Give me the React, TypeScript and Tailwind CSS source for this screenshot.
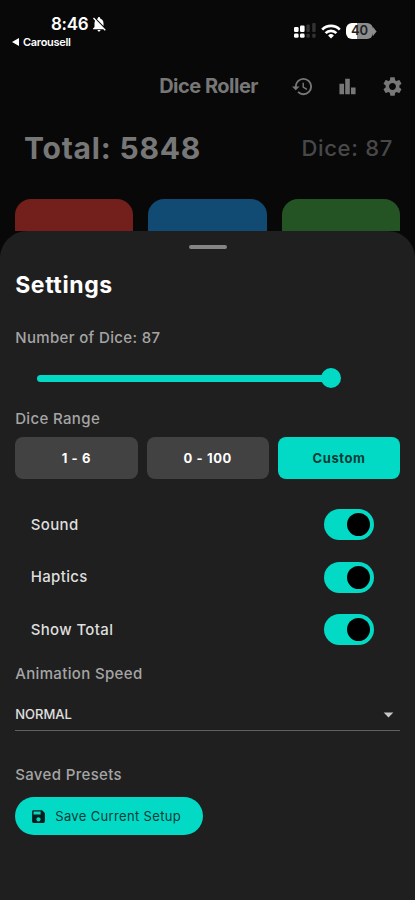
import React, { useState } from 'react';
import { MdArrowDropDown, MdHistory, MdNotificationsOff, MdSave, MdSettings } from 'react-icons/md';

function SignalIcon() {
  return (
    <svg width="22" height="16" viewBox="0 0 22 16" fill="#fff">
      <rect x="0" y="4" width="4.6" height="5" rx="1.2" />
      <rect x="6" y="2.6" width="4.6" height="6.4" rx="1.2" />
      <rect x="12.4" y="1.5" width="3.4" height="7.5" rx="1" fill="#333" />
      <rect x="18.2" y="0" width="3.4" height="9" rx="1" fill="#333" />
      <rect x="0" y="10.6" width="4.6" height="4.2" rx="1.4" />
      <rect x="6" y="10.6" width="4.6" height="4.2" rx="1.4" />
      <rect x="12.4" y="10.8" width="3.4" height="4" rx="1" fill="#333" />
      <rect x="18.2" y="10.8" width="3.4" height="4" rx="1" fill="#333" />
    </svg>
  );
}

function WifiIcon() {
  return (
    <svg width="20" height="15" viewBox="0 0 20 15" fill="none" stroke="#fff" strokeWidth="2.7">
      <path d="M1.2 5.6a12.4 12.4 0 0 1 17.6 0" />
      <path d="M4.6 9.1a7.6 7.6 0 0 1 10.8 0" />
      <path d="M10 14.4l-2.9-2.9a4.1 4.1 0 0 1 5.8 0z" fill="#fff" stroke="none" />
    </svg>
  );
}

function Battery() {
  return (
    <div className="flex items-center">
      <div className="flex h-4 w-[27px] items-center justify-center rounded-[6px] bg-linear-to-r from-white from-42% to-[#8d8d8d] to-42% text-[13px] font-semibold text-[#222]">
        40
      </div>
      <svg width="4" height="9" viewBox="0 0 4 9" fill="#8d8d8d">
        <path d="M0 0L3.6 4.5L0 9z" />
      </svg>
    </div>
  );
}

function BarsIcon() {
  return (
    <svg width="23" height="23" viewBox="0 0 24 24" fill="currentColor">
      <path d="M3.6 9h4.8v11H3.6zM9.6 4h4.8v16H9.6zM15.6 13h4.8v7h-4.8z" />
    </svg>
  );
}

interface ToggleProps {
  label: string;
  checked: boolean;
  onChange: (value: boolean) => void;
}

function ToggleRow({ label, checked, onChange }: ToggleProps) {
  return (
    <div className="flex h-[52.7px] items-center justify-between pr-[26px] pl-[15.5px]">
      <span className="pt-px text-[15px] font-medium tracking-[0.35px] text-[#dedede]">{label}</span>
      <button
        role="switch"
        aria-checked={checked}
        aria-label={label}
        onClick={() => onChange(!checked)}
        className={`flex h-[31px] w-[50px] items-center rounded-full px-1 ${checked ? 'justify-end bg-[#03dac5]' : 'justify-start bg-[#424242]'}`}
      >
        <span className="size-[23px] rounded-full bg-black" />
      </button>
    </div>
  );
}

const RANGES = ['1 - 6', '0 - 100', 'Custom'];

export default function App() {
  const [range, setRange] = useState('Custom');
  const [sound, setSound] = useState(true);
  const [haptics, setHaptics] = useState(true);
  const [showTotal, setShowTotal] = useState(true);

  return (
    <div className="flex h-[900px] w-[415px] flex-col overflow-hidden bg-[#080808] font-['Inter',sans-serif]">
      <div className="flex h-[60px] justify-between pr-[38px] pl-3 text-white">
        <div className="pt-[13px]">
          <div className="flex h-[22px] items-center gap-[2px] pl-[39px]">
            <span className="pt-px text-[17px] font-semibold tracking-[-0.3px]">8:46</span>
            <MdNotificationsOff size={18} />
          </div>
          <div className="flex h-[14px] items-center gap-1 text-[11px] font-semibold">
            <svg width="7" height="8" viewBox="0 0 7 8" fill="#fff">
              <path d="M7 0v8L0 4z" />
            </svg>
            <span className="tracking-[-0.3px]">Carousell</span>
          </div>
        </div>
        <div className="flex h-[62px] items-center gap-[5px]">
          <SignalIcon />
          <WifiIcon />
          <Battery />
        </div>
      </div>

      <div className="flex h-[52px] shrink-0 items-center justify-end pr-[11px] text-[#777]">
        <h1 className="mr-[33px] text-[20px] font-bold tracking-[-0.5px]">Dice Roller</h1>
        <div className="flex items-center gap-[22px]">
          <MdHistory size={23} />
          <BarsIcon />
          <MdSettings size={23} />
        </div>
      </div>

      <div className="flex h-[87px] shrink-0 items-center justify-between pr-[22px] pl-6 pb-[14px]">
        <span className="text-[30px] font-bold tracking-[0.8px] text-[#777]">Total: 5848</span>
        <span className="text-[22px] font-medium tracking-[0.7px] text-[#484848]">Dice: 87</span>
      </div>

      <div className="flex h-8 shrink-0 gap-[15px] px-[15px]">
        <div className="flex-1 rounded-t-2xl bg-[#73201c]" />
        <div className="flex-1 rounded-t-2xl bg-[#114a73]" />
        <div className="flex-1 rounded-t-2xl bg-[#245424]" />
      </div>

      <div className="flex flex-1 flex-col rounded-t-[27px] bg-[#1f1f1f] pt-[14px] pr-[14.8px] pl-[15.2px]">
        <div className="h-1 w-[38px] shrink-0 self-center rounded-full bg-[#858585]" />
        <h2 className="mt-[20px] text-[23px] leading-8 font-bold tracking-[0.6px] text-white">Settings</h2>

        <div className="mt-[27px] text-[15px] leading-5 font-medium tracking-[0.35px] text-[#a5a5a5]">
          Number of Dice: 87
        </div>
        <div className="mt-[20px] flex h-5 items-center pr-[59px] pl-[22px]">
          <div className="-mr-3 h-[7px] flex-1 rounded-full bg-[#03dac5]" />
          <div className="size-5 rounded-full bg-[#03dac5]" />
        </div>

        <div className="mt-[21px] text-[15px] leading-5 font-medium tracking-[0.35px] text-[#a5a5a5]">
          Dice Range
        </div>
        <div className="mt-2 flex h-[42px] shrink-0 gap-[9px]">
          {RANGES.map((item) => (
            <button
              key={item}
              onClick={() => setRange(item)}
              className={`flex-1 rounded-lg pt-px text-[13px] font-bold tracking-[0.6px] ${range === item ? 'bg-[#03dac5] text-[#073b37]' : 'bg-[#424242] text-white'}`}
            >
              {item}
            </button>
          ))}
        </div>

        <div className="mt-[19px] shrink-0">
          <ToggleRow label="Sound" checked={sound} onChange={setSound} />
          <ToggleRow label="Haptics" checked={haptics} onChange={setHaptics} />
          <ToggleRow label="Show Total" checked={showTotal} onChange={setShowTotal} />
        </div>

        <div className="mt-2 text-[15px] leading-5 font-medium tracking-[0.35px] text-[#a5a5a5]">
          Animation Speed
        </div>
        <div className="mt-[15px] flex h-[32px] shrink-0 items-center justify-between border-b border-[#606060] text-[#e0e0e0]">
          <span className="pt-px text-[13px] font-medium">NORMAL</span>
          <MdArrowDropDown size={23} className="text-[#c8c8c8]" />
        </div>

        <div className="mt-[34px] text-[15px] leading-5 font-medium tracking-[0.35px] text-[#a5a5a5]">
          Saved Presets
        </div>
        <button className="mt-3 flex h-[38px] w-[188px] shrink-0 items-center gap-2 rounded-full bg-[#03dac5] pl-[15px] text-[#073b37]">
          <MdSave size={17} className="text-[#061f1d]" />
          <span className="pt-px text-[13px] tracking-[0.35px] whitespace-nowrap">Save Current Setup</span>
        </button>
      </div>
    </div>
  );
}
